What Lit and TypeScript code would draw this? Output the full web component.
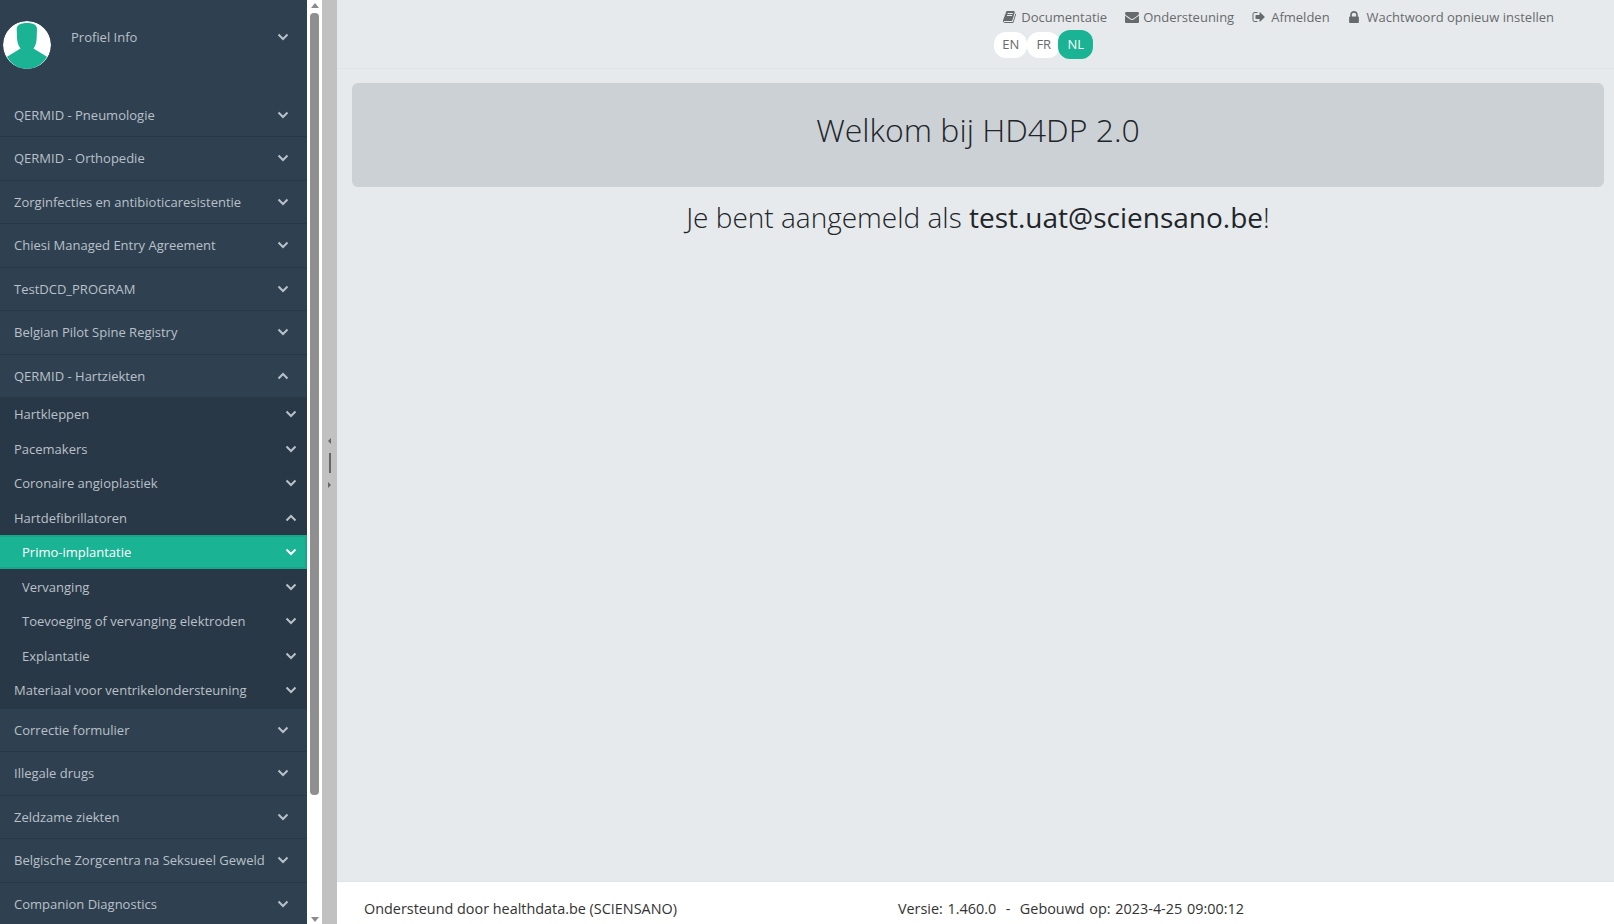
import { LitElement, html, css, svg } from "lit";
import { customElement } from "lit/decorators.js";

const chevron = (up = false) => html`<svg class="chev" viewBox="0 0 12 8" width="12" height="8"><path d=${up ? "M1.5 6.5 6 2l4.5 4.5" : "M1.5 1.5 6 6l4.5-4.5"} fill="none" stroke="currentColor" stroke-width="2"/></svg>`;

const top1 = ["QERMID - Pneumologie", "QERMID - Orthopedie", "Zorginfecties en antibioticaresistentie", "Chiesi Managed Entry Agreement", "TestDCD_PROGRAM", "Belgian Pilot Spine Registry"];
const top2 = ["Correctie formulier", "Illegale drugs", "Zeldzame ziekten", "Belgische Zorgcentra na Seksueel Geweld", "Companion Diagnostics"];

const icons = {
  book: svg`<path d="M1639 478q40 57 18 129l-275 906q-19 64-76.500 107.500t-122.500 43.500h-923q-77 0-148.500-53.500t-99.500-131.500q-24-67-2-127 0-4 3-27t4-37q1-8-3-21.500t-3-19.500q2-11 8-21t16.500-23.500 16.500-23.500q23-38 45-91.500t30-91.500q3-10 .5-30t-.5-28q3-11 17-28t17-23q21-36 42-92t25-90q1-9-2.500-32t.5-28q4-13 22-30.500t22-22.500q19-26 42.500-84.500t27.500-96.500q1-8-3-25.500t-2-26.500q2-8 9-18t18-23 17-21q8-12 16.500-30.500t15-35 16-36 19.500-32 26.500-23.500 36-11.500 47.500 5.500l-1 3q38-9 51-9h761q74 0 114 56t18 130l-274 906q-36 119-71.500 153.500t-128.500 34.500h-869q-27 0-38 15-11 16-1 43 24 70 144 70h923q29 0 56-15.500t35-41.500l300-987q7-22 5-57 38 15 59 43zm-1064 2q-4 13 2 22.500t20 9.500h608q13 0 25.500-9.500t16.500-22.500l21-64q4-13-2-22.500t-20-9.500h-608q-13 0-25.500 9.500t-16.500 22.500zm-83 256q-4 13 2 22.500t20 9.500h608q13 0 25.500-9.500t16.500-22.500l21-64q4-13-2-22.500t-20-9.500h-608q-13 0-25.500 9.500t-16.500 22.500z"/>`,
  env: svg`<path d="M1792 710v794q0 66-47 113t-113 47h-1472q-66 0-113-47t-47-113v-794q44 49 101 87 362 246 497 345 57 42 92.500 65.500t94.500 48 110 24.500h2q51 0 110-24.500t94.500-48 92.500-65.500q170-123 498-345 57-39 100-87zm0-294q0 79-49 151t-122 123q-376 261-468 325-10 7-42.500 30.500t-54 38-52 32.500-57.500 27-50 9h-2q-23 0-50-9t-57.500-27-52-32.500-54-38-42.500-30.500q-91-64-262-182.500t-205-142.500q-62-42-117-115.500t-55-136.500q0-78 41.500-130t118.500-52h1472q65 0 112.500 47t47.500 113z"/>`,
  out: svg`<path d="M704 1440q0 4 1 20t.5 26.500-3 23.500-10 19.500-20.500 6.500h-320q-119 0-203.500-84.500t-84.500-203.500v-704q0-119 84.500-203.500t203.500-84.500h320q13 0 22.500 9.500t9.500 22.500q0 4 1 20t.5 26.500-3 23.500-10 19.500-20.500 6.500h-320q-66 0-113 47t-47 113v704q0 66 47 113t113 47h312l11.500 1 11.500 3 8 5.500 7 9 2 13.500zm928-544q0 26-19 45l-544 544q-19 19-45 19t-45-19-19-45v-288h-448q-26 0-45-19t-19-45v-384q0-26 19-45t45-19h448v-288q0-26 19-45t45-19 45 19l544 544q19 19 19 45z"/>`,
  lock: svg`<path d="M640 768h512v-192q0-106-75-181t-181-75-181 75-75 181v192zm832 96v576q0 40-28 68t-68 28h-960q-40 0-68-28t-28-68v-576q0-40 28-68t68-28h32v-192q0-184 132-316t316-132 316 132 132 316v192h32q40 0 68 28t28 68z"/>`,
};

@customElement("app-root")
export class AppRoot extends LitElement {
  static styles = css`
    :host { display: grid; grid-template-columns: 307px 15px 15px 1fr; height: 924px; overflow: hidden; font-family: "Open Sans", sans-serif; font-size: 13px; color: #676a6c; background: #e7eaec; }
    .side { background: #2f4050; overflow: hidden; color: #b9c0c9; }
    .profile { height: 93.6px; display: flex; align-items: flex-start; padding-top: 21px; box-sizing: border-box; }
    .avatar { width: 48px; height: 48px; margin-left: 3px; border-radius: 50%; flex: none; display: block; }
    .profile .name { margin-left: 20px; margin-top: 7px; flex: 1; line-height: 18px; }
    .profile .chev { margin: 12px 18px 0 0; }
    .row { display: flex; align-items: center; justify-content: space-between; box-sizing: border-box; height: 43.5px; padding: 0 18px 0 14px; border-bottom: 1px solid #293846; white-space: nowrap; }
    .row.open { border-bottom: none; height: 42.3px; }
    .chev { flex: none; display: block; }
    .sub { background: #293846; height: 311.7px; }
    .sub .row { height: 34.5px; border: none; padding: 0 10px 0 14px; }
    .sub .row.in { padding-left: 22px; }
    .sub .row.active { background: #1ab394; border: solid #18a689; border-width: 2px 2px 2px 0; color: #fff; padding-right: 8px; }
    .track { background: #fff; display: flex; flex-direction: column; align-items: center; height: 924px; }
    .thumb { width: 9px; height: 782px; margin-top: 5px; background: #8f8f8f; border-radius: 4px; flex: none; }
    .arrow { width: 0; height: 0; border: 4px solid transparent; border-bottom: 5px solid #8a8a8a; border-top: none; margin-top: 3px; flex: none; }
    .arrow.dn { border-bottom: none; border-top: 5px solid #8a8a8a; margin: auto 0 2px; }
    .split { background: #c1c1c1; display: flex; flex-direction: column; align-items: center; justify-content: center; gap: 9px; padding-top: 1px; box-sizing: border-box; }
    .split i { display: block; width: 0; height: 0; border: 3px solid transparent; }
    .split .l { border-right: 3px solid #666; border-left: none; }
    .split .r { border-left: 3px solid #666; border-right: none; }
    .split b { display: block; width: 2px; height: 20px; background: #666; }
    .main { display: flex; flex-direction: column; min-width: 0; }
    .top { height: 69px; flex: none; box-sizing: border-box; border-bottom: 1px solid #dfe3e6; display: flex; justify-content: flex-end; padding: 8px 60px 0 0; }
    .links { display: flex; align-items: center; gap: 18px; padding-left: 9px; height: 18px; }
    .links a { display: flex; align-items: center; color: #676a6c; white-space: nowrap; line-height: 18px; }
    .links svg { width: 14px; height: 14px; fill: #676a6c; margin-right: 4px; flex: none; }
    .links a.out svg { margin-right: 5px; }
    .links a.lock { margin-left: 1.5px; }
    .links a.lock svg { width: 10px; height: 13px; margin-right: 7.5px; }
    .langs { display: flex; margin-top: 4px; align-items: center; }
    .langs span { width: 33px; height: 26px; box-sizing: border-box; padding-bottom: 1px; background: #fff; border-radius: 12px; display: flex; align-items: center; justify-content: center; font-size: 13px; }
    .langs .on { background: #1ab394; color: #fff; height: 29px; width: 35px; margin-left: -2px; padding-bottom: 2px; }
    .body { flex: 1; padding: 14px 10px 0 15px; text-align: center; color: #212529; }
    .hero { background: #ccd1d5; border-radius: 6px; height: 104px; box-sizing: border-box; padding-bottom: 12px; display: flex; align-items: center; justify-content: center; font-size: 32px; font-weight: 300; }
    .msg { font-size: 28px; font-weight: 300; margin-top: 10px; line-height: 40px; }
    .msg b { font-weight: 400; }
    .foot { flex: none; height: 43px; box-sizing: border-box; background: #fff; border-top: 1px solid #e1e4e6; padding: 17px 0 0 27px; display: flex; gap: 221px; font-size: 14.4px; line-height: 20px; color: #333; white-space: nowrap; }
    .foot .v { word-spacing: 1px; }
  `;

  private row(t: string) {
    return html`<div class="row"><span>${t}</span>${chevron()}</div>`;
  }

  render() {
    return html`
      <nav class="side">
        <div class="profile">
          <svg class="avatar" viewBox="0 0 48 48">
            <circle cx="24" cy="24" r="24" fill="#fff"/>
            <path d="M13.700 8C13.700 4 17.500 2 24 2s10 2 10 6L33.700 17c-.2 4-1 8-3.200 10.500L44 35.700C39.500 43.500 32 48 24 48S8.500 43.500 4 35.700L17.500 27.500C15.300 25 14.200 21 14 17z" fill="#1ab394"/>
          </svg>
          <span class="name">Profiel Info</span>${chevron()}
        </div>
        ${top1.map((t) => this.row(t))}
        <div class="row open"><span>QERMID - Hartziekten</span>${chevron(true)}</div>
        <div class="sub">
          <div class="row"><span>Hartkleppen</span>${chevron()}</div>
          <div class="row"><span>Pacemakers</span>${chevron()}</div>
          <div class="row"><span>Coronaire angioplastiek</span>${chevron()}</div>
          <div class="row"><span>Hartdefibrillatoren</span>${chevron(true)}</div>
          <div class="row in active"><span>Primo-implantatie</span>${chevron()}</div>
          <div class="row in"><span>Vervanging</span>${chevron()}</div>
          <div class="row in"><span>Toevoeging of vervanging elektroden</span>${chevron()}</div>
          <div class="row in"><span>Explantatie</span>${chevron()}</div>
          <div class="row"><span>Materiaal voor ventrikelondersteuning</span>${chevron()}</div>
        </div>
        ${top2.map((t) => this.row(t))}
      </nav>
      <div class="track"><span class="arrow"></span><div class="thumb"></div><span class="arrow dn"></span></div>
      <div class="split"><i class="l"></i><b></b><i class="r"></i></div>
      <main class="main">
        <header class="top">
          <div>
            <div class="links">
              <a><svg viewBox="0 0 1792 1792">${icons.book}</svg>Documentatie</a>
              <a><svg viewBox="0 0 1792 1792">${icons.env}</svg>Ondersteuning</a>
              <a class="out"><svg viewBox="0 0 1792 1792">${icons.out}</svg>Afmelden</a>
              <a class="lock"><svg viewBox="320 128 1152 1536">${icons.lock}</svg>Wachtwoord opnieuw instellen</a>
            </div>
            <div class="langs"><span>EN</span><span>FR</span><span class="on">NL</span></div>
          </div>
        </header>
        <section class="body">
          <div class="hero">Welkom bij HD4DP 2.0</div>
          <div class="msg">Je bent aangemeld als <b>test.uat@sciensano.be</b>!</div>
        </section>
        <footer class="foot"><span>Ondersteund door healthdata.be (SCIENSANO)</span><span class="v">Versie: 1.460.0 &nbsp;-&nbsp; Gebouwd op: 2023-4-25 09:00:12</span></footer>
      </main>
    `;
  }
}
